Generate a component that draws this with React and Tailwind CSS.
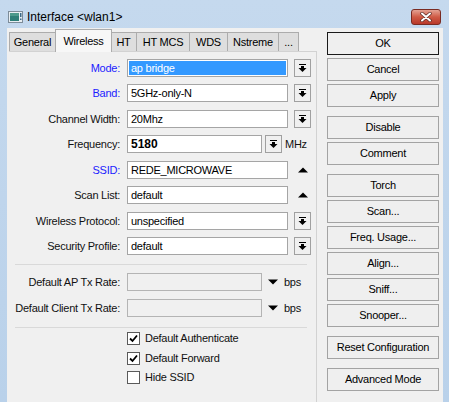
import React from "react";

const F = { fontFamily: '"Liberation Sans", Arial, sans-serif' };

function DropArrow() {
  return (
    <svg width="9" height="9" viewBox="0 0 9 9">
      <rect x="1" y="0" width="7" height="1" fill="#000" />
      <rect x="3" y="2" width="3" height="2" fill="#000" />
      <polygon points="0.5,4 8.5,4 4.5,8" fill="#000" />
    </svg>
  );
}

function DropBtn() {
  return (
    <div className="w-[17px] h-[18px] border border-[#a0a0a0] bg-[#f0f0f0] flex items-center justify-center">
      <DropArrow />
    </div>
  );
}

function Label({ children, blue }) {
  return (
    <div
      className={
        "w-[112px] pr-[1px] text-right shrink-0 " +
        (blue ? "text-[#1c1cff]" : "text-[#111]")
      }
    >
      {children}
    </div>
  );
}

function Input({ children, w = "w-[161px]", bold }) {
  return (
    <div
      className={
        w +
        " h-[18px] border border-[#a5a5a5] bg-white pl-[3px] flex items-center " +
        (bold ? "font-bold text-[12px] tracking-normal" : "")
      }
    >
      {children}
    </div>
  );
}

function Row({ mt, children }) {
  return <div className={"flex items-center gap-[6px] h-[18px] " + mt}>{children}</div>;
}

function Btn({ children, mt, def }) {
  return (
    <div
      className={
        "h-[23px] w-[112px] flex items-center justify-center bg-[#efefef] border text-black " +
        (def ? "border-[#1a1a1a] " : "border-[#a3a3a3] ") +
        mt
      }
    >
      {children}
    </div>
  );
}

function Check({ checked, label, mt }) {
  return (
    <div className={"flex items-center h-[13px] " + mt}>
      <div className="w-[118px] shrink-0" />
      <div className="w-[13px] h-[13px] border border-[#5a5a5a] bg-white flex items-center justify-center">
        {checked && (
          <svg width="9" height="9" viewBox="0 0 9 9">
            <path d="M1 4.5 L3.5 7 L8 1.5" fill="none" stroke="#000" strokeWidth="1.8" />
          </svg>
        )}
      </div>
      <div className="ml-[5px] text-[#111]">{label}</div>
    </div>
  );
}

function UpTri() {
  return (
    <div className="w-[17px] h-[18px] flex items-center justify-center">
      <svg width="10" height="6" viewBox="0 0 10 6">
        <polygon points="0,5.5 10,5.5 5,0.5" fill="#000" />
      </svg>
    </div>
  );
}

function Tab({ label, w, sel }) {
  if (sel) {
    return (
      <div
        className={
          w +
          " h-[23px] bg-[#f7f7f7] border border-[#acacac] border-b-0 relative z-10 flex items-start justify-center pt-[3px] -mx-[1px]"
        }
      >
        {label}
      </div>
    );
  }
  return (
    <div
      className={
        w +
        " h-[20px] bg-[#dedede] border border-[#acacac] border-b-0 -ml-[1px] first:ml-0 flex items-center justify-center"
      }
    >
      {label}
    </div>
  );
}

export default function App() {
  return (
    <div
      className="w-[449px] h-[402px] overflow-hidden bg-gradient-to-b from-[#c5d9ee] to-[#b9d1ea] text-[11px] tracking-[-0.25px]"
      style={F}
    >
      {/* Title bar */}
      <div className="h-[28px] flex items-center relative">
        <div className="ml-[8px] mt-[6px]">
          <svg width="15" height="12" viewBox="0 0 15 12">
            <rect x="0.5" y="0.5" width="14" height="11" fill="#e8eef2" stroke="#7d8c99" />
            <rect x="2" y="2" width="9" height="8" fill="#2f7f78" />
            <rect x="2" y="2" width="9" height="3" fill="#4d9a8c" />
            <rect x="12" y="2" width="1.5" height="4" fill="#3d6a8a" />
            <rect x="12" y="7.5" width="1.5" height="1.5" fill="#3d6a8a" />
          </svg>
        </div>
        <div className="ml-[4px] mt-[6px] text-[12px] tracking-normal text-black">
          Interface &lt;wlan1&gt;
        </div>
        <div className="absolute left-[411px] top-[9px] w-[30px] h-[16px] rounded-[3px] border border-[#7a2b22] bg-gradient-to-b from-[#e3a193] via-[#cf5a45] to-[#b8382a] flex items-center justify-center">
          <svg width="12" height="10" viewBox="0 0 12 10">
            <path d="M2 1.5 L10 8.5 M10 1.5 L2 8.5" stroke="#5a2a25" strokeWidth="3.4" strokeLinecap="round" />
            <path d="M2 1.5 L10 8.5 M10 1.5 L2 8.5" stroke="#fff" strokeWidth="2" strokeLinecap="round" />
          </svg>
        </div>
      </div>

      {/* Client area */}
      <div className="ml-[7px] mr-[6px] h-[374px] bg-[#f0f0f0] flex">
        {/* Left */}
        <div className="pl-[2px] flex flex-col">
          <div className="mt-[1px] h-[23px] flex items-end">
            <Tab label="General" w="w-[47px]" />
            <Tab label="Wireless" w="w-[57px]" sel />
            <Tab label="HT" w="w-[27px]" />
            <Tab label="HT MCS" w="w-[54px]" />
            <Tab label="WDS" w="w-[39px]" />
            <Tab label="Nstreme" w="w-[52px]" />
            <Tab label="..." w="w-[21px]" />
          </div>
          <div className="-mt-[1px] w-[308px] h-[352px] border-t border-r border-[#d2d2d2] flex flex-col">
            <Row mt="mt-[7px]">
              <Label blue>Mode:</Label>
              <div className="w-[161px] h-[18px] border border-[#a5a5a5] bg-white p-[1px]">
                <div className="h-full bg-[#3399ff] text-white pl-[2px] flex items-center">ap bridge</div>
              </div>
              <DropBtn />
            </Row>
            <Row mt="mt-[7px]">
              <Label blue>Band:</Label>
              <Input>5GHz-only-N</Input>
              <DropBtn />
            </Row>
            <Row mt="mt-[8px]">
              <Label>Channel Width:</Label>
              <Input>20Mhz</Input>
              <DropBtn />
            </Row>
            <Row mt="mt-[7px]">
              <Label>Frequency:</Label>
              <Input w="w-[135px]" bold>5180</Input>
              <div className="-ml-[3px]">
                <DropBtn />
              </div>
              <div className="-ml-[3px] text-[#111]">MHz</div>
            </Row>
            <Row mt="mt-[8px]">
              <Label blue>SSID:</Label>
              <Input>REDE_MICROWAVE</Input>
              <UpTri />
            </Row>
            <Row mt="mt-[7px]">
              <Label>Scan List:</Label>
              <Input>default</Input>
              <UpTri />
            </Row>
            <Row mt="mt-[8px]">
              <Label>Wireless Protocol:</Label>
              <Input>unspecified</Input>
              <DropBtn />
            </Row>
            <Row mt="mt-[7px]">
              <Label>Security Profile:</Label>
              <Input>default</Input>
              <DropBtn />
            </Row>
            <div className="mt-[9px] ml-[6px] w-[292px] h-[1px] bg-[#d9d9d9]" />
            <Row mt="mt-[8px]">
              <Label>Default AP Tx Rate:</Label>
              <div className="w-[135px] h-[18px] border border-[#b4b4b4] bg-[#f0f0f0]" />
              <svg width="10" height="6" viewBox="0 0 10 6" className="ml-[0px]">
                <polygon points="0,0.5 10,0.5 5,5.5" fill="#000" />
              </svg>
              <div className="text-[#111]">bps</div>
            </Row>
            <Row mt="mt-[8px]">
              <Label>Default Client Tx Rate:</Label>
              <div className="w-[135px] h-[18px] border border-[#b4b4b4] bg-[#f0f0f0]" />
              <svg width="10" height="6" viewBox="0 0 10 6">
                <polygon points="0,0.5 10,0.5 5,5.5" fill="#000" />
              </svg>
              <div className="text-[#111]">bps</div>
            </Row>
            <div className="mt-[10px] ml-[6px] w-[292px] h-[1px] bg-[#d9d9d9]" />
            <Check checked label="Default Authenticate" mt="mt-[4px]" />
            <Check checked label="Default Forward" mt="mt-[7px]" />
            <Check label="Hide SSID" mt="mt-[6px]" />
          </div>
        </div>

        {/* Right buttons */}
        <div className="ml-[10px] pt-[4px] flex flex-col">
          <Btn def>OK</Btn>
          <Btn mt="mt-[3px]">Cancel</Btn>
          <Btn mt="mt-[3px]">Apply</Btn>
          <Btn mt="mt-[9px]">Disable</Btn>
          <Btn mt="mt-[3px]">Comment</Btn>
          <Btn mt="mt-[9px]">Torch</Btn>
          <Btn mt="mt-[3px]">Scan...</Btn>
          <Btn mt="mt-[3px]">Freq. Usage...</Btn>
          <Btn mt="mt-[3px]">Align...</Btn>
          <Btn mt="mt-[3px]">Sniff...</Btn>
          <Btn mt="mt-[3px]">Snooper...</Btn>
          <Btn mt="mt-[9px]">Reset Configuration</Btn>
          <Btn mt="mt-[9px]">Advanced Mode</Btn>
        </div>
      </div>
    </div>
  );
}
